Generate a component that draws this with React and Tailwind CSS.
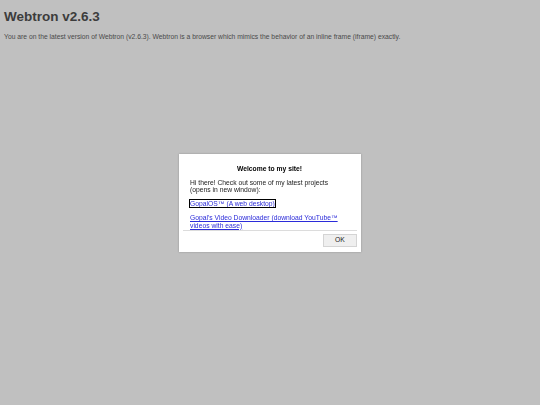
import React from 'react';

function WelcomeDialog()
{
    return(
        <div className="fixed inset-0 flex items-center justify-center">
            <div className="flex w-[182px] h-[98px] flex-col bg-white p-[4px] shadow-[0_0_2px_rgba(0,0,0,0.25)]">
                <div className="h-[73px] overflow-hidden border-b border-[#dcdcdc] pl-[7px] pr-[8px] pt-[7px] text-[6.75px] leading-[7.5px] text-[#222]">
                    <p className="mb-[6.5px] text-center font-bold text-black">Welcome to my site!</p>
                    <p className="mb-[6.5px]">Hi there! Check out some of my latest projects (opens in new window):</p>
                    <p className="mb-[6.5px]">
                        <a href="#" className="text-[#2b2bd9] underline outline outline-1 outline-black">GopalOS™ (A web desktop)</a>
                    </p>
                    <p>
                        <a href="#" className="text-[#2b2bd9] underline">Gopal's Video Downloader (download YouTube™ videos with ease)</a>
                    </p>
                </div>
                <div className="flex justify-end pt-[3px]">
                    <button className="h-[13px] w-[34px] border border-[#d4d4d4] bg-[#efefef] text-[6.75px] text-[#222]">OK</button>
                </div>
            </div>
        </div>
    );
}

export default function App()
{
    return(
        <div className="min-h-screen bg-[#c0c0c0] px-[4px] pt-[8.5px] font-['Liberation_Sans',Arial,sans-serif]">
            <h1 className="mb-[9px] text-[13.5px] font-bold leading-[15.5px] text-[#3c3c3c]">Webtron v2.6.3</h1>
            <p className="text-[6.75px] leading-[7.5px] text-[#4a4a4a]">
                You are on the latest version of Webtron (v2.6.3). Webtron is a browser which mimics the behavior of an inline frame (iframe) exactly.
            </p>
            <WelcomeDialog />
        </div>
    );
}
